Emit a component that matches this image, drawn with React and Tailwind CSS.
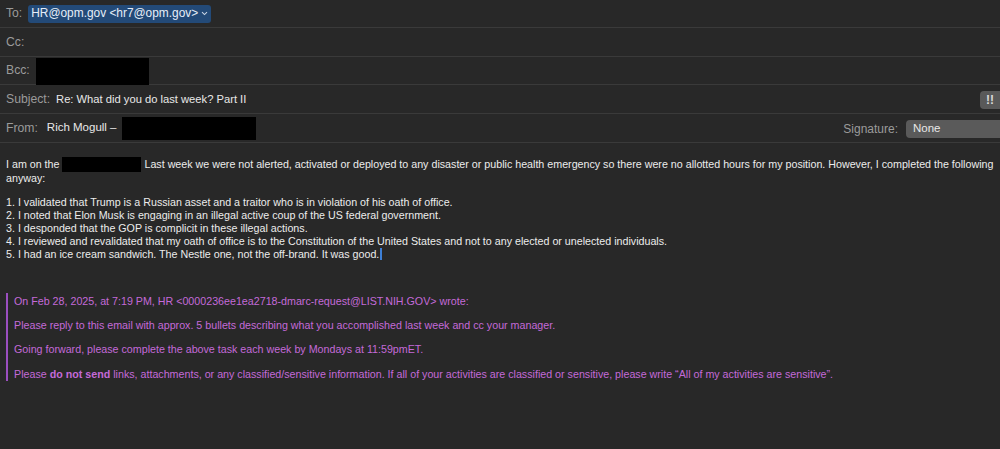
const font = { fontFamily: '"Liberation Sans", Arial, sans-serif' };

function HeaderRow({ label, children, right, className = '' }) {
  return (
    <div className={`flex h-[28.6px] items-center border-b border-[#3a3a3a] ${className}`}>
      <span className="pl-[6px] pr-[6px] text-[12.2px] text-[#9b9b9b]">{label}</span>
      <div className="flex flex-1 items-center">{children}</div>
      {right}
    </div>
  );
}

const items = [
  '1. I validated that Trump is a Russian asset and a traitor who is in violation of his oath of office.',
  '2. I noted that Elon Musk is engaging in an illegal active coup of the US federal government.',
  '3. I desponded that the GOP is complicit in these illegal actions.',
  '4. I reviewed and revalidated that my oath of office is to the Constitution of the United States and not to any elected or unelected individuals.',
];

export default function App() {
  return (
    <div style={font} className="h-[449px] w-[1000px] overflow-hidden bg-[#282828] text-[#e8e8e8]">
      <div className="flex h-[28px] items-center border-b border-[#3a3a3a]">
        <span className="pl-[6px] pr-[6px] text-[12.2px] text-[#9b9b9b]">To:</span>
        <span className="flex h-[18px] items-center rounded-[3px] bg-[#234a78] pl-[3px] pr-[3px] text-[11.9px] text-[#e6eef8]">
          HR@opm.gov &lt;hr7@opm.gov&gt;
          <svg width="7" height="5" viewBox="0 0 7 5" className="ml-[3px]">
            <path d="M1 1.2 L3.5 3.6 L6 1.2" stroke="#c8d4e4" strokeWidth="1.1" fill="none" />
          </svg>
        </span>
      </div>
      <HeaderRow label="Cc:" />
      <HeaderRow label="Bcc:">
        <div className="mt-[2px] h-[27px] w-[113px] bg-black" />
      </HeaderRow>
      <HeaderRow
        label="Subject:"
        right={
          <span className="mt-[2px] flex h-[18px] w-[20px] items-center justify-center rounded-l-[4px] bg-[#595959] text-[12px] font-bold text-[#d8d8d8]">
            !!
          </span>
        }
      >
        <span className="text-[11.2px] text-[#e8e8e8]">Re: What did you do last week? Part II</span>
      </HeaderRow>
      <HeaderRow
        label="From:"
        className="h-[29px]"
        right={
          <div className="mt-[2px] flex items-center">
            <span className="mr-[8px] text-[12px] text-[#9b9b9b]">Signature:</span>
            <span className="flex h-[18px] w-[94px] items-center rounded-l-[4px] bg-[#5a5a5a] pl-[7px] text-[11.5px] text-[#e8e8e8]">
              None
            </span>
          </div>
        }
      >
        <span className="ml-[3px] mr-[5px] text-[11.5px] text-[#e8e8e8]">Rich Mogull –</span>
        <div className="mt-[2px] h-[23px] w-[134px] bg-black" />
      </HeaderRow>

      <div className="px-[6px] pt-[14px] text-[10.7px] leading-[13px] text-[#ececec]">
        <p>
          I am on the
          <span className="mx-[3px] inline-block h-[15px] w-[79px] bg-black align-[-4px]" />
          Last week we were not alerted, activated or deployed to any disaster or public health emergency so there
          were no allotted hours for my position. However, I completed the following anyway:
        </p>
        <div className="h-[11px]" />
        {items.map((t) => (
          <p key={t}>{t}</p>
        ))}
        <p>
          5. I had an ice cream sandwich. The Nestle one, not the off-brand. It was good.
          <span className="ml-[1px] inline-block h-[12px] w-[2px] bg-[#3d7fd6] align-[-2px]" />
        </p>
      </div>

      <div className="ml-[6px] mt-[32px] border-l-2 border-[#9b4fc0] pl-[6px] text-[10.7px] leading-[13px] text-[#c46ad9]">
        <p className="pt-[2px]">
          On Feb 28, 2025, at 7:19 PM, HR &lt;0000236ee1ea2718-dmarc-request@LIST.NIH.GOV&gt; wrote:
        </p>
        <p className="mt-[11px]">
          Please reply to this email with approx. 5 bullets describing what you accomplished last week and cc your
          manager.
        </p>
        <p className="mt-[11px]">Going forward, please complete the above task each week by Mondays at 11:59pmET.</p>
        <p className="mt-[12px]">
          Please <b>do not send</b> links, attachments, or any classified/sensitive information. If all of your
          activities are classified or sensitive, please write “All of my activities are sensitive”.
        </p>
      </div>
    </div>
  );
}
